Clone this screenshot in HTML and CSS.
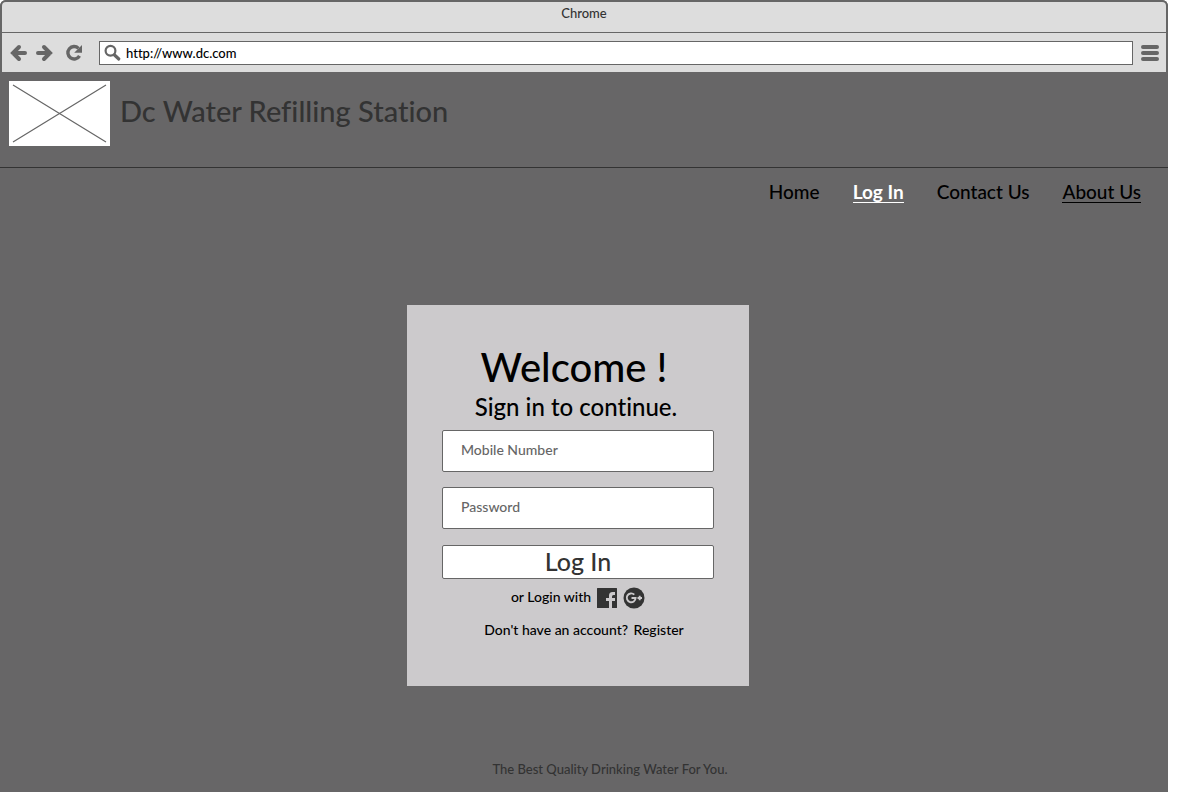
FILE: index.html
```html
<!DOCTYPE html>
<html lang="en">
<head>
<meta charset="utf-8">
<title>Dc Water Refilling Station</title>
<link rel="stylesheet" href="styles.css">
</head>
<body>
<div class="window">
  <div class="chrome">
    <div class="titlebar">Chrome</div>
    <div class="toolbar">
      <button class="tool" type="button" aria-label="Back">
        <svg width="18" height="18" viewBox="0 0 18 18"><path d="M9 3 3 9l6 6M3 9h12" fill="none" stroke="currentColor" stroke-width="4" stroke-linecap="round"/></svg>
      </button>
      <button class="tool" type="button" aria-label="Forward">
        <svg width="18" height="18" viewBox="0 0 18 18"><path d="M8 3l6 6-6 6M14 9H2" fill="none" stroke="currentColor" stroke-width="4" stroke-linecap="round"/></svg>
      </button>
      <button class="tool reload" type="button" aria-label="Reload">
        <svg width="18" height="18" viewBox="0 0 18 18"><path d="M13.500 4.400A6.200 6.200 0 1 0 14.500 11.800" fill="none" stroke="currentColor" stroke-width="3.400"/><path d="M17 1v7.800H9.200Z" fill="currentColor"/></svg>
      </button>
      <div class="address">
        <svg width="18" height="18" viewBox="0 0 18 18"><circle cx="6.500" cy="6.800" r="4.900" fill="none" stroke="currentColor" stroke-width="2.200"/><path d="m10.500 11 4.300 4" stroke="currentColor" stroke-width="3.200" stroke-linecap="round"/></svg>
        <input class="url" type="text" aria-label="Address" value="http://www.dc.com">
      </div>
      <button class="tool" type="button" aria-label="Menu">
        <svg width="18" height="18" viewBox="0 0 18 18"><path d="M2 3h14M2 9h14M2 15h14" stroke="currentColor" stroke-width="4" stroke-linecap="round"/></svg>
      </button>
    </div>
  </div>
  <header class="banner">
    <svg class="logo" width="101" height="65" viewBox="0 0 101 65" role="img" aria-label="Logo"><path d="M0 0h101v65H0Z" fill="#fff"/><path d="m4 4 93 57M4 61 97 4" stroke="#666" stroke-width="1.200"/></svg>
    <h1 class="brand">Dc Water Refilling Station</h1>
  </header>
  <nav class="nav">
    <a class="link" href="#home">Home</a>
    <a class="link active" href="#login">Log In</a>
    <a class="link" href="#contact">Contact Us</a>
    <a class="link underlined" href="#about">About Us</a>
  </nav>
  <main class="main">
    <form class="card">
      <h2 class="welcome">Welcome !</h2>
      <p class="lead">Sign in to continue.</p>
      <input class="field" type="tel" aria-label="Mobile Number" placeholder="Mobile Number">
      <input class="field" type="password" aria-label="Password" placeholder="Password">
      <button class="submit" type="button">Log In</button>
      <div class="social">
        <span>or Login with</span>
        <a class="icon" href="#facebook" aria-label="Facebook"><svg width="22" height="22" viewBox="0 0 22 22"><path d="M1.500 1h19q.500 0 .500.500v19q0 .500-.500.500H16v-7h3v-3h-3V9.500q0-1.500 1.500-1.500H19V5h-2.500q-3.500 0-3.500 3.500V11h-3v3h3v7H1.500q-.500 0-.500-.500v-19Q1 1 1.500 1Z" fill="currentColor"/></svg></a>
        <a class="icon" href="#google" aria-label="Google Plus"><svg width="22" height="22" viewBox="0 0 22 22"><circle cx="11" cy="11" r="10.500" fill="currentColor"/><path d="M11.300 7.700A4.400 4.400 0 1 0 12.600 11H8.500M14.500 11h4.500M16.700 8.800v4.400" fill="none" stroke="#cccacc" stroke-width="1.900"/></svg></a>
      </div>
      <p class="signup">Don't have an account? <a class="register" href="#register">Register</a></p>
    </form>
  </main>
  <footer class="footer">The Best Quality Drinking Water For You.</footer>
</div>
</body>
</html>
```
FILE: styles.css
```css
* { box-sizing: border-box; }

body {
  margin: 0;
  background: #fff;
  color: #000;
  font-family: Lato, "Open Sans", sans-serif;
  font-size: 14px;
  font-weight: 500;
  font-variant-ligatures: none;
}

input, button { font: inherit; }
h1, h2, p { margin: 0; }
h1, h2 { font-weight: 500; }
a { color: inherit; text-decoration: none; }
svg { display: block; }

.window {
  display: flex;
  flex-direction: column;
  min-height: 100vh;
  margin-right: 33px;
  background: #676667;
  border-radius: 6px 6px 0 0;
}

.chrome {
  border: 2px solid #666;
  border-bottom: 0;
  border-radius: 6px 6px 0 0;
  background: #ddd;
}

.titlebar {
  height: 31px;
  border-bottom: 1px solid #666;
  line-height: 22px;
  font-size: 13px;
  text-align: center;
  color: #333;
}

.toolbar {
  display: flex;
  align-items: center;
  gap: 8px;
  height: 39px;
  padding: 0 7px 0 8px;
}

.tool {
  padding: 0;
  border: 0;
  background: none;
  color: #666;
}

.reload { margin: 0 8px 0 3px; }

.address {
  display: flex;
  flex: 1;
  align-items: center;
  gap: 4px;
  height: 24px;
  padding-left: 4px;
  border: 1px solid #666;
  background: #fff;
  color: #666;
}

.url {
  flex: 1;
  min-width: 0;
  padding: 0;
  border: 0;
  background: none;
  color: #000;
  font-size: 13px;
}

.banner {
  display: flex;
  align-items: flex-start;
  gap: 10px;
  padding: 9px 9px 21px;
  border-bottom: 1px solid #333;
}

.logo { flex: none; }

.brand {
  padding-top: 12px;
  font-size: 29px;
  line-height: 36px;
  color: #333;
}

.nav {
  display: flex;
  justify-content: flex-end;
  gap: 33px;
  padding: 14px 27px 0;
  font-size: 19px;
  line-height: 20px;
}

.link { border-bottom: 1px solid transparent; }
.active { border-color: #fff; color: #fff; font-weight: 700; }
.underlined { border-color: #000; }

.main {
  display: flex;
  flex: 1;
  justify-content: center;
  align-items: flex-start;
  padding: 102px 12px 0 0;
}

.card {
  display: flex;
  flex-direction: column;
  width: 342px;
  padding: 36px 35px 44px;
  background: #cccacc;
}

.welcome {
  padding-right: 8px;
  font-size: 40px;
  line-height: 52px;
  text-align: center;
}

.lead {
  padding-right: 4px;
  margin-bottom: 9px;
  font-size: 24px;
  line-height: 28px;
  text-align: center;
}

.field {
  width: 100%;
  height: 42px;
  margin-bottom: 15px;
  padding: 0 18px 3px;
  border: 1px solid #666;
  border-radius: 2px;
  background: #fff;
}

.field::placeholder { color: #666; opacity: 1; }

.submit {
  height: 34px;
  margin-top: 1px;
  padding: 0 0 2px;
  border: 1px solid #666;
  border-radius: 2px;
  background: #fff;
  color: #333;
  font-size: 25px;
  line-height: 30px;
}

.social {
  display: flex;
  justify-content: center;
  gap: 5px;
  padding-top: 8px;
  line-height: 20px;
}

.icon { color: #333; }

.signup {
  padding: 9px 0 0 12px;
  line-height: 24px;
  text-align: center;
}

.register { margin-left: 2px; }

.footer {
  padding: 0 0 13px 52px;
  font-size: 13px;
  line-height: 20px;
  text-align: center;
  color: #333;
}
```
